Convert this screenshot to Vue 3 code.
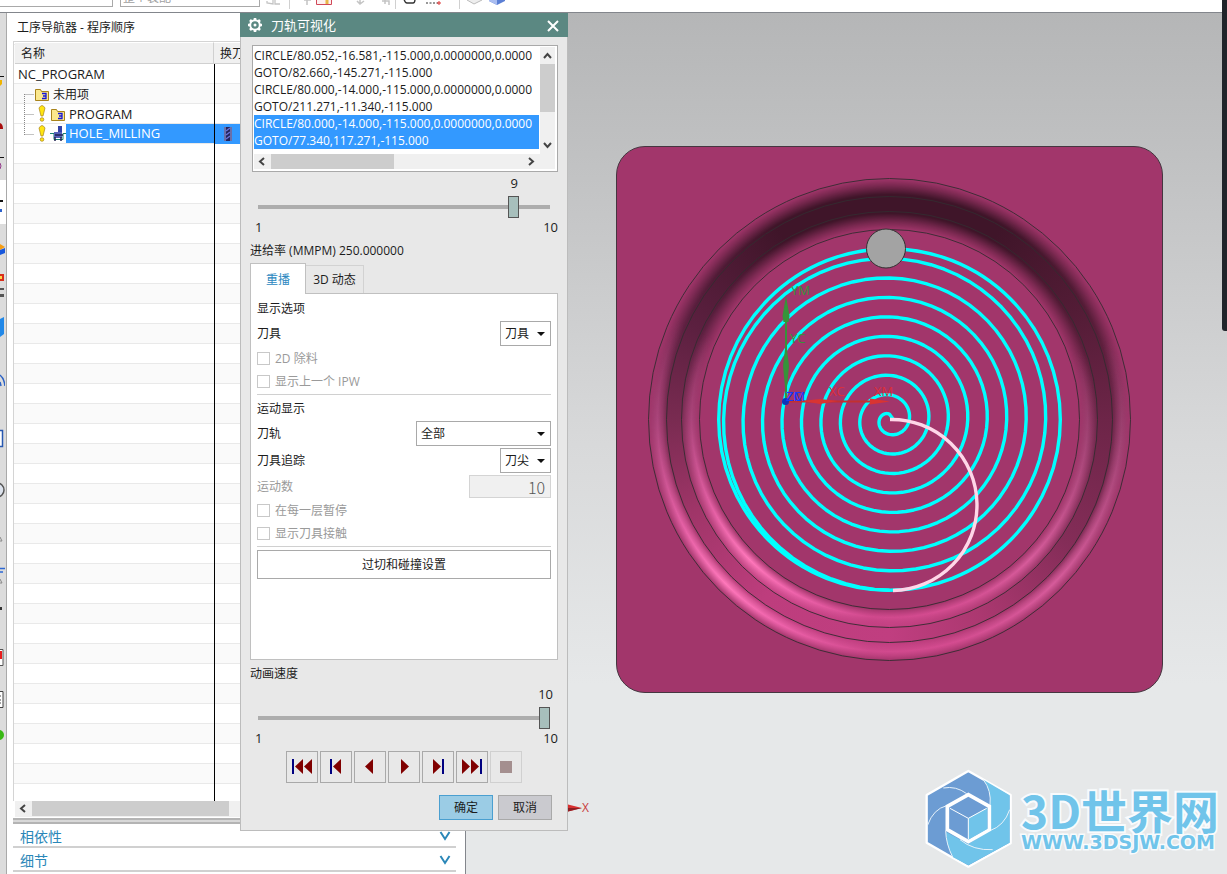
<script setup>
import { ref } from 'vue'

const logLines = [
  { text: 'CIRCLE/80.052,-16.581,-115.000,0.0000000,0.0000', on: false },
  { text: 'GOTO/82.660,-145.271,-115.000', on: false },
  { text: 'CIRCLE/80.000,-14.000,-115.000,0.0000000,0.0000', on: false },
  { text: 'GOTO/211.271,-11.340,-115.000', on: false },
  { text: 'CIRCLE/80.000,-14.000,-115.000,0.0000000,0.0000', on: true },
  { text: 'GOTO/77.340,117.271,-115.000', on: true }
]

const position = ref(9)
const speed = ref(10)
const tab = ref('replay')

const transport = [
  { name: '到起点', bars: [6], tris: ['17,8 17,23 9,15.5', '26,8 26,23 18,15.5'] },
  { name: '上一步', bars: [10], tris: ['21,8 21,23 13,15.5'] },
  { name: '后退', bars: [], tris: ['19,8 19,23 11,15.5'] },
  { name: '播放', bars: [], tris: ['13,8 13,23 21,15.5'] },
  { name: '下一步', bars: [20], tris: ['11,8 11,23 19,15.5'] },
  { name: '到终点', bars: [24], tris: ['6,8 6,23 14,15.5', '15,8 15,23 23,15.5'] }
]

// Tool path: spiral growing counter-clockwise from the top, closed by a full circle.
const cx = 273.5
const cy = 273.5
function buildSpiral() {
  const pts = ['277,273']
  for (let a = 0; a <= 34 * 90; a += 5) {
    const r = 5.2 + (4.87 * a) / 90
    const t = (a * Math.PI) / 180
    pts.push(`${(cx - r * Math.sin(t)).toFixed(2)},${(cy - r * Math.cos(t)).toFixed(2)}`)
  }
  return pts.join(' ')
}
const spiral = buildSpiral()
const edges = [241, 223, 208, 190]
</script>

<template>
  <div class="app">
    <div class="toolbar">
      <input class="tb-field tb-filter" type="text" aria-label="过滤器" />
      <select class="tb-field tb-scope" aria-label="选择范围"><option>整个装配</option></select>
      <svg class="tb-icons" width="250" height="12" viewBox="260 0 250 12" aria-hidden="true">
        <path d="M267 1v2l6 1v-4M275 0v4h5" fill="none" stroke="#c4c4c4" stroke-width="1.3" />
        <path d="M289.500 0v9M395.500 0v9M459.500 0v9" stroke="#d0d0d0" />
        <path d="M307 0v5M304 0h7M360 0v4M357 1l3 3 4-3M385 0v4M382 1h7v4" fill="none" stroke="#c4c4c4" stroke-width="1.500" />
        <path d="M316.500-5v9.500h15v-9.500" fill="#fdf0f0" stroke="#d04858" />
        <path d="M327 0v4" stroke="#e7b647" stroke-width="3" />
        <path d="M404-1q1 4 3 4h6q2 0 2-4" fill="none" stroke="#333" stroke-width="1.400" />
        <path d="M426 3h12" stroke="#333" stroke-dasharray="2 1.500" />
        <path d="M437 3h4M439 1v4" stroke="#d33" />
        <path d="M467 0l7 4 8-4" fill="#eee" stroke="#bbb" />
        <path d="M489 0v1l8 4 8-4v-1z" fill="#5b7fd4" />
        <path d="M489 0h8v5l-8-4z" fill="#aabdf0" />
      </svg>
    </div>

    <div class="workspace">
      <div class="rail">
        <svg width="5" height="861" viewBox="0 13 5 861" aria-hidden="true">
          <path d="M0 76.500h4M0 157.500h4" stroke="#111" />
          <path d="M0 80h2v4l-2 2z" fill="#f0b400" />
          <path d="M0 123q3 1 3 6h-3z" fill="#a80d0d" />
          <path d="M0 163q2 3 0 6" fill="none" stroke="#93398a" />
          <path d="M0 200h3v2h-3z" fill="#111" />
          <path d="M0 209h2v3h-2z" fill="#2d62cc" />
          <path d="M0 244l5 3-5 3z" fill="#f59d14" />
          <path d="M0 250l5-2v5l-5 2z" fill="#1757dc" />
          <path d="M0 274h4v7h-4z" fill="#d82d1b" />
          <path d="M0 276h2v3h-2z" fill="#ffd54a" />
          <path d="M0 288h4v2h-4M0 294h4v3h-4" fill="#555" />
          <path d="M0 319l4-2v17l-4 3z" fill="#2188e8" />
          <path d="M0 375q4 3 5 11M0 382l1 4" fill="none" stroke="#2c62c5" stroke-width="1.500" />
          <path d="M-1 430.500h3.500v16h-4" fill="#fff" stroke="#2858b0" stroke-width="1.500" />
          <circle cx="-3" cy="490" r="7" fill="#dce2ec" stroke="#555" stroke-width="1.500" />
          <path d="M0 537l2 4h-2M0 579l2 4h-2" fill="none" stroke="#888" />
          <path d="M0 568.500h5M0 572h3" stroke="#2d67d3" stroke-width="1.500" />
          <path d="M0 607h2v3h-2z" fill="#333" />
          <path d="M-1 649.500h4v16h-4" fill="#fff" stroke="#555" />
          <path d="M0 651h2v8h-2z" fill="#e81d1d" />
          <path d="M-1 691.500h4v16h-4M0 696h1M0 700h1M0 703h1" fill="#fff" stroke="#444" />
          <circle cx="-1" cy="735" r="5" fill="#39b915" />
        </svg>
      </div>

      <section class="navigator">
        <h2 class="nav-title">工序导航器 - 程序顺序</h2>
        <div class="tree">
          <table>
            <thead>
              <tr><th class="c-name">名称</th><th>换刀</th></tr>
            </thead>
            <tbody>
              <tr><td><span class="cell root">NC_PROGRAM</span></td><td></td></tr>
              <tr>
                <td>
                  <span class="cell">
                    <svg width="38" height="20" viewBox="0 0 38 20" aria-hidden="true">
                      <path d="M9.500 10v10M9.500 10.500h9" stroke="#888" stroke-dasharray="1 1" fill="none" />
                      <path d="M20.500 5.500h5l1 2h7v9h-13z" fill="#fbe88d" stroke="#a8831b" />
                      <path d="M27 9.500h4v5h-4M28 12h3" stroke="#1616d8" stroke-width="1.300" fill="none" />
                    </svg>
                    <span class="cn">未用项</span>
                  </span>
                </td><td></td>
              </tr>
              <tr>
                <td>
                  <span class="cell">
                    <svg width="54" height="20" viewBox="0 0 54 20" aria-hidden="true">
                      <path d="M9.500 0v20M9.500 10.500h9" stroke="#888" stroke-dasharray="1 1" fill="none" />
                      <path d="M24 4q3-5 6 0l-2 8h-2z" fill="#ffe512" stroke="#a8831b" stroke-width=".7" />
                      <circle cx="27" cy="15.500" r="1.800" fill="#ffe512" stroke="#a8831b" stroke-width=".7" />
                      <path d="M36.500 5.500h5l1 2h7v9h-13z" fill="#fbe88d" stroke="#a8831b" />
                      <path d="M43 9.500h4v5h-4M44 12h3" stroke="#1616d8" stroke-width="1.300" fill="none" />
                    </svg>
                    PROGRAM
                  </span>
                </td><td></td>
              </tr>
              <tr class="picked">
                <td>
                  <span class="cell">
                    <svg class="plain" width="51" height="19" viewBox="0 0 51 19" aria-hidden="true">
                      <path d="M9.500 0v11M9.500 10.500h9" stroke="#888" stroke-dasharray="1 1" fill="none" />
                      <path d="M24 4q3-5 6 0l-2 8h-2z" fill="#ffe512" stroke="#a8831b" stroke-width=".7" />
                      <circle cx="27" cy="15.500" r="1.800" fill="#ffe512" stroke="#a8831b" stroke-width=".7" />
                      <path d="M35 9.500h4v6h9v-6h3" fill="none" stroke="#16806f" />
                      <path d="M43 2h4v6h-4z" fill="#3341a8" />
                      <path d="M39 8h8v6h-8z" fill="#5662b8" />
                      <path d="M40 11h8M40 13v4M46 13v4" stroke="#1f2252" stroke-width="1.500" />
                    </svg>
                    <span class="op">HOLE_MILLING</span>
                  </span>
                </td>
                <td>
                  <svg class="cutter" width="8" height="14" viewBox="0 0 8 14" aria-hidden="true">
                    <path d="M0 0h2v14H0zM6 0h2v14H6z" fill="#6a6fa8" />
                    <path d="M2 0h4v14H2z" fill="#23245c" />
                    <path d="M2 4l4-3M2 8l4-3M2 12l4-3" stroke="#6872d8" stroke-width="1.500" />
                  </svg>
                </td>
              </tr>
            </tbody>
          </table>
        </div>
        <div class="tree-scroll">
          <svg width="17" height="15" aria-hidden="true"><path d="M10 4L6 7.500l4 3.500" fill="none" stroke="#444" stroke-width="2" /></svg>
          <span class="thumb"></span>
        </div>
        <div class="splitter"></div>
        <button v-for="name in ['相依性', '细节']" :key="name" class="fold" type="button">
          {{ name }}
          <svg width="12" height="10" viewBox="0 0 12 10" aria-hidden="true"><path d="M1.500 1L6 8l4.500-7" fill="none" stroke="#2a87b8" stroke-width="2" /></svg>
        </button>
      </section>

      <main class="viewport">
        <div class="part">
          <div class="groove floor"></div>
          <div class="groove shine"></div>
          <svg class="paths" width="547" height="547" viewBox="0 0 547 547" role="img" aria-label="刀轨">
            <circle v-for="r in edges" :key="r" cx="273.500" cy="273.500" :r="r" fill="none" stroke="#332b30" stroke-width=".9" />
            <polyline :points="spiral" fill="none" stroke="#0ff" stroke-width="3.400" stroke-linejoin="round" />
            <circle :cx="cx" :cy="cy" r="170.800" fill="none" stroke="#0ff" stroke-width="3.400" />
            <path d="M274 273.500A85 85 0 0 1 277 444.500" fill="none" stroke="#ffd6e8" stroke-width="3.400" />
            <g class="csys">
              <path d="M170 254V170" stroke="#36933a" stroke-width="2" />
              <path d="M170 150l3.500 20-1 6h-5l-1-6zM170 195l3 25-2 21h-2l-2-21z" fill="#36933a" />
              <path d="M170 255.500h92" stroke="#c23030" stroke-width="2" />
              <path d="M274 255.500l-20 3v-6zM222 255l-18-2-18 2 18 3z" fill="#d93432" />
              <circle cx="169.500" cy="255.500" r="3.500" fill="#0d34b8" />
              <text x="175" y="149" fill="#36933a">YM</text>
              <text x="174" y="197" fill="#36933a">YC</text>
              <text x="213" y="250" fill="#dc2f3a">XC</text>
              <text x="258" y="250" fill="#dc2f3a">XM</text>
              <text x="170" y="255" fill="#1538ff">ZM</text>
              <text x="170" y="255" fill="#1538ff">ZC</text>
            </g>
            <circle cx="270" cy="102.500" r="19.500" fill="#a3a3a3" stroke="#333" />
          </svg>
        </div>

        <svg class="axis" width="30" height="16" viewBox="0 0 30 16" role="img" aria-label="X">
          <path d="M0 4.500L14 8 0 11.500z" fill="#d83030" />
          <path d="M0 8h14L0 11.500z" fill="#8e1d22" />
          <text x="14" y="12" fill="#c93c3c" font-size="12">X</text>
        </svg>

        <div class="brand">
          <svg width="88" height="100" viewBox="75 60 264 300" aria-hidden="true">
            <path d="M205 66L332 138V283L205 353L80 281V138Z" fill="#6c9cd3" stroke="#fff" stroke-width="7" stroke-linejoin="round" />
            <path d="M250 92Q275 125 270 168L273 242L205 285L137 248Q138 285 158 324L205 349L329 281V139Z" fill="#70c4ea" />
            <path d="M130 117Q168 110 200 134M250 92Q275 125 270 168M329 182Q313 230 270 245M278 302Q220 305 180 272M158 324Q138 285 137 245M83 228Q100 180 140 170" fill="none" stroke="#e7f2fa" stroke-width="3" />
            <path d="M205 137L268 172V242L205 278L142 242V172Z" fill="#6c9cd3" stroke="#fff" stroke-width="11" />
            <path d="M205 208L262 176V240L205 272Z" fill="#70c4ea" />
            <path d="M150 178L205 208L260 178M205 208V271" fill="none" stroke="#fff" stroke-width="3" />
          </svg>
          <div class="brand-text">
            <span class="brand-name">3D世界网</span>
            <span class="brand-url">WWW.3DSJW.COM</span>
          </div>
        </div>
      </main>
    </div>

    <div class="edge-bar"></div>

    <section class="dialog" role="dialog" aria-labelledby="dlg-title">
      <header class="dlg-head">
        <svg width="16" height="16" viewBox="0 0 16 16" aria-hidden="true">
          <circle cx="8" cy="8" r="4.800" fill="none" stroke="#fff" stroke-width="2" />
          <circle cx="8" cy="8" r="1.500" fill="#fff" />
          <path d="M8 1v2M8 13v2M1 8h2M13 8h2M3 3l1.500 1.500M11.500 11.500L13 13M13 3l-1.500 1.500M3 13l1.500-1.500" stroke="#fff" stroke-width="2.600" />
        </svg>
        <h1 id="dlg-title">刀轨可视化</h1>
        <button class="close" type="button" aria-label="关闭">
          <svg width="12" height="12" viewBox="0 0 12 12"><path d="M1 1l10 10M11 1L1 11" stroke="#fff" stroke-width="2" /></svg>
        </button>
      </header>

      <div class="dlg-body">
        <div class="log">
          <ul role="listbox" aria-label="刀轨列表">
            <li v-for="(line, i) in logLines" :key="i" role="option" :aria-selected="line.on" :class="{ on: line.on }">{{ line.text }}</li>
          </ul>
          <div class="vbar">
            <svg width="15" height="17"><path d="M4 11l3.500-4 3.500 4" fill="none" stroke="#444" stroke-width="2" /></svg>
            <span></span>
            <svg class="down" width="15" height="17"><path d="M4 6l3.500 4 3.500-4" fill="none" stroke="#444" stroke-width="2" /></svg>
          </div>
          <div class="hbar">
            <svg width="17" height="15"><path d="M10 4L6 7.500l4 3.500" fill="none" stroke="#444" stroke-width="2" /></svg>
            <span></span>
            <svg class="right" width="17" height="15"><path d="M7 4l4 3.500L7 11" fill="none" stroke="#444" stroke-width="2" /></svg>
          </div>
        </div>

        <div class="slider first">
          <output for="pos">{{ position }}</output>
          <input id="pos" v-model="position" type="range" min="1" max="10" aria-label="刀轨位置" />
          <div class="ends"><span>1</span><span>10</span></div>
        </div>

        <p class="feed">进给率 (MMPM) 250.000000</p>

        <div class="tabs" role="tablist">
          <button type="button" role="tab" class="tab t-replay" :class="{ active: tab === 'replay' }" @click="tab = 'replay'">重播</button>
          <button type="button" role="tab" class="tab t-dyn" :class="{ active: tab === 'dynamic' }" @click="tab = 'dynamic'">3D 动态</button>
        </div>
        <div class="pane">
          <h3>显示选项</h3>
          <div class="field">
            <label for="tool">刀具</label>
            <span class="pick small"><select id="tool"><option>刀具</option></select></span>
          </div>
          <label class="check"><input type="checkbox" disabled />2D 除料</label>
          <label class="check"><input type="checkbox" disabled />显示上一个 IPW</label>
          <hr />
          <h3>运动显示</h3>
          <div class="field">
            <label for="path">刀轨</label>
            <span class="pick wide"><select id="path"><option>全部</option></select></span>
          </div>
          <div class="field next">
            <label for="trace">刀具追踪</label>
            <span class="pick small"><select id="trace"><option>刀尖</option></select></span>
          </div>
          <div class="field off">
            <label for="count">运动数</label>
            <input id="count" class="count" type="text" value="10" disabled />
          </div>
          <label class="check"><input type="checkbox" disabled />在每一层暂停</label>
          <label class="check"><input type="checkbox" disabled />显示刀具接触</label>
          <hr />
          <button class="setup" type="button">过切和碰撞设置</button>
        </div>

        <label class="speed-label" for="speed">动画速度</label>
        <div class="slider second">
          <output class="max" for="speed">{{ speed }}</output>
          <input id="speed" v-model="speed" type="range" min="1" max="10" />
          <div class="ends"><span>1</span><span>10</span></div>
        </div>

        <div class="transport">
          <button v-for="b in transport" :key="b.name" type="button" :aria-label="b.name">
            <svg width="30" height="30" viewBox="1 1 30 30">
              <rect v-for="x in b.bars" :key="x" :x="x" y="8" width="2" height="15" fill="#000080" />
              <polygon v-for="t in b.tris" :key="t" :points="t" fill="#800000" />
            </svg>
          </button>
          <button type="button" disabled aria-label="停止">
            <svg width="30" height="30"><rect x="9" y="9" width="12" height="12" fill="#a48f8f" /></svg>
          </button>
        </div>

        <div class="actions">
          <button class="ok" type="button">确定</button>
          <button type="button">取消</button>
        </div>
      </div>
    </section>
  </div>
</template>

<style>
body { margin: 0; overflow: hidden; }
</style>

<style scoped>
* { box-sizing: border-box; }
.app { position: relative; display: flex; flex-direction: column; height: 100vh; overflow: hidden; background: #fff; color: #1c1c1c; font: 12px/17px "Open Sans", "Noto Sans CJK SC", sans-serif; }
button, input, select { font: inherit; color: inherit; margin: 0; }
h1, h2, h3, p, ul { margin: 0; padding: 0; font-weight: 400; font-size: 12px; list-style: none; }

.toolbar { flex: none; display: flex; align-items: flex-end; height: 13px; overflow: hidden; border-bottom: 1px solid #83868c; background: #fff; }
.tb-field { flex: none; height: 20px; margin-bottom: 5px; padding: 0 2px; border: 1px solid #a9a9a9; background: #fff; color: #a0a0a0; appearance: none; border-radius: 0; }
.tb-filter { width: 113px; border-left: 0; }
.tb-scope { width: 140px; margin-left: 7px; }
.tb-icons { flex: none; }

.workspace { flex: 1; display: flex; min-height: 0; }
.rail { flex: none; width: 7px; border-right: 1px solid #a9a9a9; background: linear-gradient(#dcdcdc 167px, #fff 167px 211px, #dcdcdc 211px); overflow: hidden; }
.rail svg { display: block; }

.navigator { flex: none; display: flex; flex-direction: column; width: 459px; padding-left: 6px; border-right: 1px solid #83868c; background: #fff; }
.nav-title { height: 28px; padding: 1px 0 0 4px; line-height: 28px; }
.tree { flex: 1; min-height: 0; overflow: hidden; border-left: 1px solid #d4d4d4; border-top: 1px solid #d4d4d4; padding-left: 1px; background: linear-gradient(#000, #000) 199px 22px / 1px 100% no-repeat content-box, repeating-linear-gradient(#fff 0 19px, #e9e9e9 19px 20px, #fafafa 20px 39px, #e9e9e9 39px 40px) 0 22px; }
.tree table { width: 100%; border-collapse: separate; border-spacing: 0; table-layout: fixed; }
.tree th { height: 22px; padding: 0 0 0 6px; border-bottom: 1px solid #d0d0d0; border-top: 1px solid #fff; background: #f0f0f0; text-align: left; font-weight: 400; }
.tree .c-name { width: 199px; border-right: 1px solid #d0d0d0; }
.tree td { height: 20px; padding: 0; }
.tree td + td { border-left: 1px solid #000; }
.cell { display: flex; align-items: center; height: 19px; font-size: 13px; white-space: nowrap; }
.cell.root { padding-left: 3px; }
.cell .cn { font-size: 12px; }
.cell svg { flex: none; }
.picked td { background: #3399ff; background-clip: content-box; padding-bottom: 1px; color: #fff; height: 20px; }
.picked .plain { background: #fff; }
.picked .op { padding-left: 3px; }
.picked td + td { background-clip: padding-box; }
.cutter { display: block; margin-left: 9px; }
.tree-scroll { flex: none; display: flex; height: 16px; margin-left: 2px; background: #f0f0f0; }
.tree-scroll .thumb { width: 197px; height: 15px; background: #cdcdcd; }
.splitter { flex: none; height: 6px; margin-top: 1px; border-top: 2px solid #b4b4b4; border-bottom: 2px solid #b4b4b4; background: #d8d8d8; }
.fold { flex: none; display: flex; align-items: center; justify-content: space-between; height: 24px; margin-right: 9px; padding: 2px 5px 0 7px; border: 0; border-bottom: 2px solid #d0d0d0; background: #fff; color: #2a87b8; font-size: 14px; }
.fold:last-child { margin-bottom: 2px; }

.viewport { flex: 1; position: relative; min-width: 0; background: linear-gradient(#b5b6b7, #bfc0c1 15%, #d8d9da 50%, #e6e8e9 78%, #e6e8e9); }
.part { position: absolute; left: 150px; top: 133px; width: 547px; height: 547px; border: 1px solid #453640; border-radius: 29px; background: #a2366b; }
.groove { position: absolute; left: 30px; top: 30px; width: 485px; height: 485px; border-radius: 50%; }
.floor {
  background: conic-gradient(#3f1529 0deg, #3f1529 30deg, #531c36 60deg, #6d2548 90deg, #842d58 125deg, #ab3870 155deg, #c03e80 180deg, #bd3d7d 215deg, #9f3568 245deg, #792b51 270deg, #5c2040 295deg, #3f1529 330deg, #3f1529 360deg);
  mask-image: radial-gradient(circle at center, transparent 190px, #0006 197px, #000 206px, #000 225px, #0006 234px, transparent 241px);
}
.shine {
  background: conic-gradient(transparent 0deg, transparent 70deg, #ba5a8e80 95deg, #d65c9b 135deg, #d44c90 165deg, #d0498d 185deg, #ee63ab 208deg, #ff78bb 225deg, #e762a7 242deg, #b94f89b0 270deg, #a2366b00 295deg, transparent 360deg);
  mask-image: radial-gradient(circle at center, transparent 190px, #000 198px, #0008 203px, transparent 209px, transparent 223px, #0008 227px, #000 232px, transparent 241px);
}
.paths { position: absolute; left: -1px; top: -1px; }
.csys text { font: 13px "Open Sans", sans-serif; }
.axis { position: absolute; left: 102px; top: 787px; }
.brand { position: absolute; right: 8px; bottom: 5px; display: flex; align-items: center; gap: 8px; color: #70c4ea; }
.brand svg { flex: none; }
.brand-text { display: flex; flex-direction: column; white-space: nowrap; paint-order: stroke fill; -webkit-text-stroke: 4px #f8fbfd; }
.brand-name { font: 700 46px/46px "Noto Sans CJK SC", sans-serif; }
.brand-url { font: 700 19px/20px "DejaVu Sans", sans-serif; -webkit-text-stroke-width: 3px; }
.edge-bar { position: absolute; right: 0; top: 0; width: 5px; height: 331px; border-radius: 0 0 0 3px; background: #20242a; }

.dialog { position: absolute; left: 240px; top: 13px; width: 328px; height: 818px; border: 1px solid #bcbcbc; border-top: 0; background: #e8e8e8; }
.dlg-head { display: flex; align-items: center; height: 24px; margin: 0 -1px; padding: 0 9px 0 7px; background: #5b8882; color: #fff; }
.dlg-head h1 { flex: 1; margin-left: 8px; font-size: 13px; }
.close { display: flex; padding: 2px 0 0; border: 0; background: none; }
.dlg-body { padding: 8px 9px 0; }
.log { display: grid; grid-template: 107px 15px / 285px 15px; column-gap: 1px; margin: 0 0 0 2px; width: 306px; height: 127px; padding: 1px; border: 1px solid #a9a9a9; background: #fff; }
.log ul { overflow: hidden; }
.log li { height: 17px; white-space: nowrap; line-height: 17px; }
.log .on { background: #3399ff; color: #fff; }
.vbar { display: flex; flex-direction: column; background: #f0f0f0; }
.vbar span { height: 48px; background: #cdcdcd; }
.vbar .down { margin-top: auto; }
.hbar { display: flex; grid-column: 1 / 3; background: #f0f0f0; padding-right: 16px; }
.hbar span { width: 123px; background: #cdcdcd; }
.hbar .right { margin-left: auto; }

.slider { display: flex; flex-direction: column; margin: 0 0 0 8px; width: 292px; font-size: 13px; line-height: 17px; }
.slider.first { padding-top: 3px; }
.slider output { align-self: flex-end; margin: 0 32px 4px 0; }
.slider output.max { margin-right: -3px; }
.slider input { appearance: none; width: 292px; height: 22px; background: linear-gradient(#adadad, #adadad) center / 100% 4px no-repeat; }
.slider input::-webkit-slider-thumb { appearance: none; width: 11px; height: 22px; border: 1px solid #555; background: #a7bfbc; border-radius: 0; }
.ends { display: flex; justify-content: space-between; margin: 1px -8px 0 -3px; }
.feed { margin-top: 6px; }

.tabs { display: flex; align-items: flex-end; height: 30px; margin-top: 4px; }
.tab { position: relative; height: 28px; padding: 0; border: 1px solid #d2d2d2; border-left: 0; border-bottom: 0; background: #e8e8e8; }
.t-replay { width: 56px; }
.t-dyn { width: 58px; }
.tab.active { z-index: 1; height: 31px; margin-bottom: -1px; border: 1px solid #c0c0c0; border-bottom: 0; background: #fff; color: #2a87c0; }
.pane { width: 308px; height: 367px; padding: 6px 6px 0; border: 1px solid #c0c0c0; background: #fff; }
.pane h3 { height: 17px; margin-bottom: 4px; }
.field { display: flex; align-items: center; justify-content: space-between; height: 25px; margin-bottom: 1px; }
.field.next { margin-top: 2px; }
.field.off { color: #9a9a9a; margin-bottom: 0; }
.pick { position: relative; height: 25px; }
.pick::after { content: ""; position: absolute; right: 6px; top: 11px; border: 4px solid transparent; border-top-color: #111; border-bottom: 0; }
.pick select { width: 100%; height: 25px; padding: 0 4px; border: 1px solid #a9a9a9; border-radius: 0; background: #fff; appearance: none; }
.pick.small { width: 51px; }
.pick.wide { width: 135px; }
.count { width: 82px; height: 23px; padding: 0 5px; border: 1px solid #d4d4d4; background: #f0f0f0; color: #555; text-align: right; font: 16px "Noto Sans CJK SC", sans-serif; font-weight: 300; }
.check { display: flex; align-items: center; gap: 5px; height: 23px; color: #9a9a9a; }
.check input { appearance: none; width: 13px; height: 13px; border: 1px solid #c8c8c8; background: #fff; }
.pane hr { height: 1px; margin: 1px 0 5px; border: 0; background: #d0d0d0; }
.setup { display: block; width: 100%; height: 29px; margin-top: -2px; border: 1px solid #a9a9a9; background: #fff; }
.speed-label { display: block; margin-top: 5px; }
.slider.second { padding-top: 4px; }
.transport { display: flex; gap: 2px; margin: 4px 0 0 36px; }
.transport button { display: flex; width: 32px; height: 32px; padding: 0; border: 1px solid #a9a9a9; background: #e8e8e8; }
.transport button:disabled { border-color: #d0d0d0; }
.actions { display: flex; justify-content: flex-end; gap: 5px; margin: 12px 6px 0 0; }
.actions button { width: 54px; height: 25px; padding: 0; border: 1px solid #a9a9a9; background: #cacacf; }
.actions .ok { border-color: #4a9fd0; background: #9bcce5; }
</style>
